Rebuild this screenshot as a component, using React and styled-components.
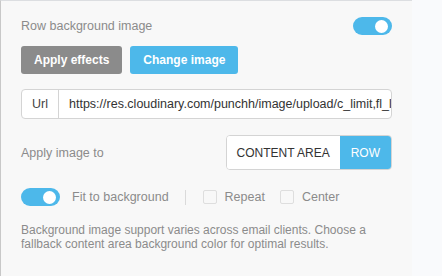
import React from 'react';
import styled, { createGlobalStyle } from 'styled-components';

const blue = '#4db8ea';
const muted = '#8b8b8b';

const GlobalStyle = createGlobalStyle`
    html, body {
        margin: 0;
        padding: 0;
        background: #f9fafc;
        font-family: "Liberation Sans", Arial, sans-serif;
    }
`;

const Panel = styled.div`
    box-sizing: border-box;
    width: 412px;
    height: 276px;
    padding: 16px 20px 0 20px;
    background: #f8f8f8;
    border-top: 1px solid #dcdee1;
    border-left: 1px solid #c8c8c8;
    display: flex;
    flex-direction: column;
`;

const Row = styled.div`
    display: flex;
    align-items: center;
    justify-content: ${p => p.spread ? 'space-between' : 'flex-start'};
    gap: ${p => p.gap || 0}px;
    margin-top: ${p => p.top || 0}px;
    height: ${p => p.h ? `${p.h}px` : 'auto'};
`;

const Label = styled.span`
    font-size: 12.5px;
    color: ${muted};
    margin-left: ${p => p.ml || 0}px;
`;

const Toggle = styled.div`
    position: relative;
    width: 39px;
    height: 18px;
    border-radius: 9px;
    background: ${blue};
    flex-shrink: 0;
    &::after {
        content: '';
        position: absolute;
        top: 2.5px;
        right: 4px;
        width: 13px;
        height: 13px;
        border-radius: 50%;
        background: #fff;
    }
`;

const Button = styled.button`
    height: 28px;
    padding: 0 ${p => p.pad}px;
    border: none;
    border-radius: 3px;
    background: ${p => p.primary ? blue : muted};
    color: #fff;
    font-family: "Liberation Sans", Arial, sans-serif;
    font-weight: bold;
    font-size: 12px;
`;

const InputGroup = styled.div`
    box-sizing: border-box;
    display: flex;
    height: 30px;
    margin-top: 15px;
    border: 1px solid #d4d4d4;
    border-radius: 4px;
    background: #fff;
    overflow: hidden;
`;

const Addon = styled.div`
    width: 36px;
    display: flex;
    align-items: center;
    justify-content: center;
    border-right: 1px solid #d4d4d4;
    font-size: 12.5px;
    color: #444;
`;

const UrlText = styled.div`
    flex: 1;
    display: flex;
    align-items: center;
    padding-left: 10px;
    font-size: 12.5px;
    color: #333;
    white-space: nowrap;
    overflow: hidden;
    text-overflow: clip;
`;

const Segment = styled.div`
    box-sizing: border-box;
    display: flex;
    height: 35px;
    border: 1px solid #d4d4d4;
    border-radius: 4px;
    overflow: hidden;
    background: #fff;
`;

const SegmentItem = styled.div`
    display: flex;
    align-items: center;
    padding: 0 ${p => p.pad}px;
    font-size: 12px;
    color: ${p => p.active ? '#fff' : '#333'};
    background: ${p => p.active ? blue : '#fff'};
`;

const Divider = styled.div`
    width: 1px;
    height: 15px;
    background: #dadada;
    margin: 0 17px 0 16px;
`;

const Check = styled.span`
    box-sizing: border-box;
    width: 14px;
    height: 14px;
    border: 1px solid #dedede;
    border-radius: 2px;
    background: #f8f8f8;
    margin-right: 8px;
    margin-left: ${p => p.ml || 0}px;
`;

const Note = styled.p`
    margin: 17px 0 0 0;
    font-size: 12px;
    line-height: 14px;
    color: ${muted};
`;

export default function App() {
    return (
        <>
            <GlobalStyle />
            <Panel>
                <Row spread h={18}>
                    <Label>Row background image</Label>
                    <Toggle />
                </Row>
                <Row gap={8} top={11}>
                    <Button pad={13}>Apply effects</Button>
                    <Button primary pad={13}>Change image</Button>
                </Row>
                <InputGroup>
                    <Addon>Url</Addon>
                    <UrlText>https://res.cloudinary.com/punchh/image/upload/c_limit,fl_lo</UrlText>
                </InputGroup>
                <Row spread top={16}>
                    <Label>Apply image to</Label>
                    <Segment>
                        <SegmentItem pad={10}>CONTENT AREA</SegmentItem>
                        <SegmentItem active pad={11}>ROW</SegmentItem>
                    </Segment>
                </Row>
                <Row top={18} h={18}>
                    <Toggle />
                    <Label ml={12}>Fit to background</Label>
                    <Divider />
                    <Check />
                    <Label>Repeat</Label>
                    <Check ml={15} />
                    <Label>Center</Label>
                </Row>
                <Note>
                    Background image support varies across email clients. Choose a
                    <br />
                    fallback content area background color for optimal results.
                </Note>
            </Panel>
        </>
    );
}
